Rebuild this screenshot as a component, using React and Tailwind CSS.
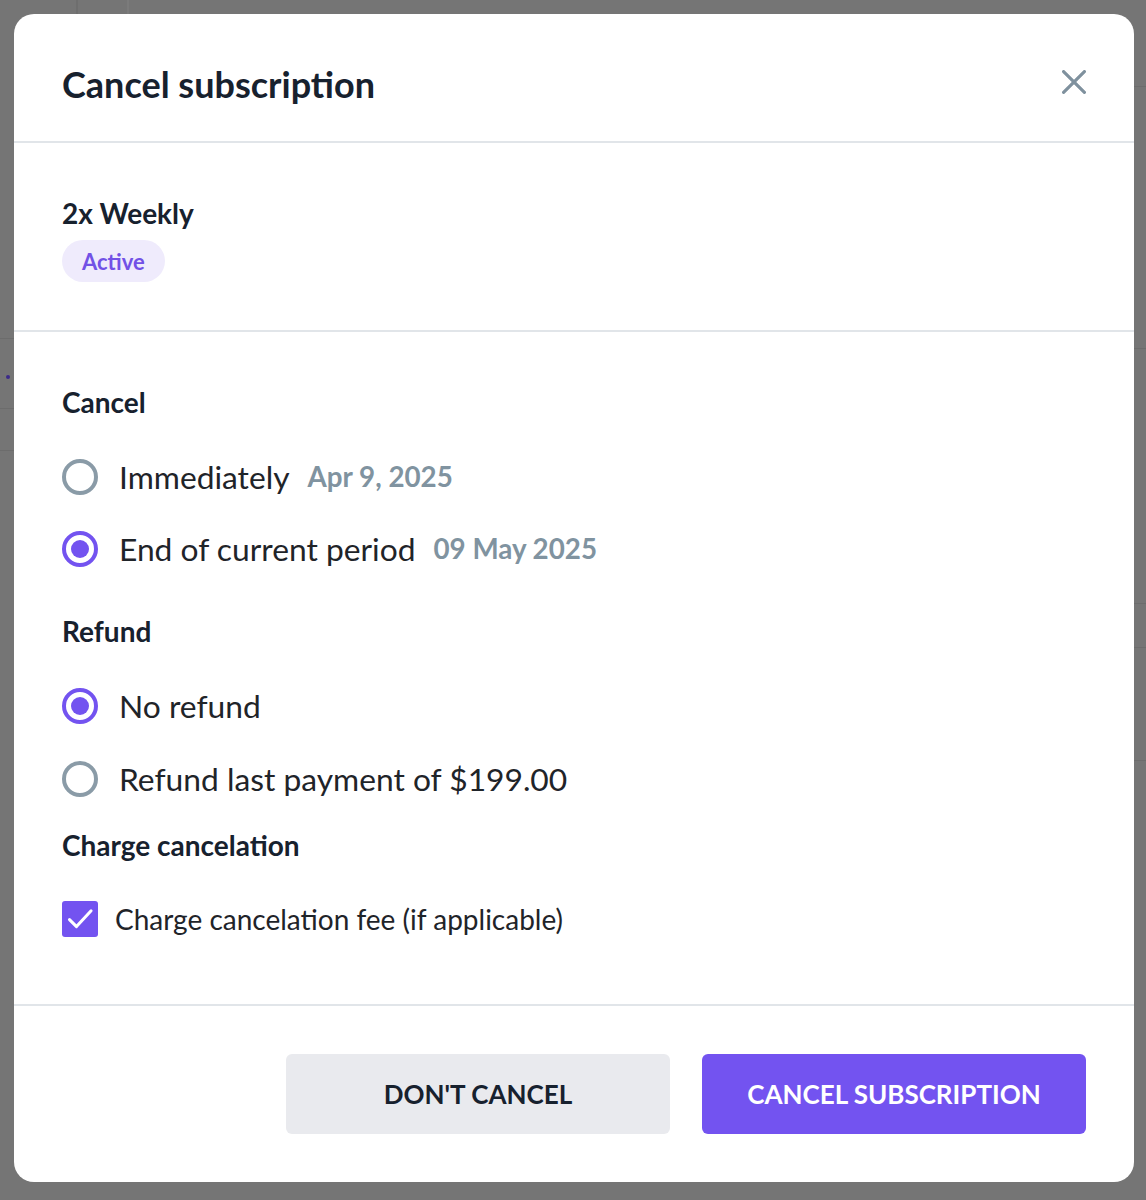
import React from "react";

function Radio({ checked }) {
  return checked ? (
    <span className="flex h-9 w-9 shrink-0 items-center justify-center rounded-full border-[4px] border-[#7353f0]">
      <span className="h-[18px] w-[18px] rounded-full bg-[#7353f0]" />
    </span>
  ) : (
    <span className="h-9 w-9 shrink-0 rounded-full border-[4px] border-[#8a9ba7]" />
  );
}

function RadioRow({ checked, label, extra, className }) {
  return (
    <div className={"flex h-12 items-center " + (className || "")}>
      <Radio checked={checked} />
      <span className="ml-[21px] text-[31.75px] leading-[40px] text-[#1f2429]">{label}</span>
      {extra && (
        <span className="ml-[18px] text-[27.75px] font-bold leading-[40px] text-[#8093a0]">{extra}</span>
      )}
    </div>
  );
}

export default function App() {
  return (
    <div
      className="relative h-[1200px] w-[1146px] overflow-hidden bg-[#757575]"
      style={{ fontFamily: "Lato, 'Noto Sans', sans-serif" }}
    >
      {/* faint underlying page lines */}
      <div className="absolute left-[76px] top-0 h-[14px] w-[2px] bg-[#6e6e6e]" />
      <div className="absolute left-[127px] top-0 h-[14px] w-[2px] bg-[#7b7b7b]" />
      <div className="absolute left-0 top-[338px] h-[1px] w-[14px] bg-[#6c6c6c]" />
      <div className="absolute left-0 top-[408px] h-[1px] w-[14px] bg-[#6c6c6c]" />
      <div className="absolute left-0 top-[450px] h-[1px] w-[14px] bg-[#6c6c6c]" />
      <div className="absolute left-[6px] top-[375px] h-[4px] w-[4px] rounded-full bg-[#3b2a8a]" />
      <div className="absolute right-0 top-[86px] h-[1px] w-[12px] bg-[#6c6c6c]" />
      <div className="absolute right-0 top-[348px] h-[1px] w-[12px] bg-[#6c6c6c]" />
      <div className="absolute right-0 top-[603px] h-[1px] w-[12px] bg-[#6c6c6c]" />
      <div className="absolute right-0 top-[647px] h-[1px] w-[12px] bg-[#6c6c6c]" />
      <div className="absolute right-0 top-[760px] h-[1px] w-[12px] bg-[#6c6c6c]" />

      <div className="relative p-[14px]">
        <div className="flex h-[1168px] w-[1120px] flex-col overflow-hidden rounded-[20px] bg-white">
          {/* header */}
          <div className="flex items-start justify-between border-b-2 border-[#e1e5e9] pl-12 pr-12 pt-[48px] pb-[35px]">
            <h1 className="text-[36px] font-bold leading-[44px] text-[#17212e]">Cancel subscription</h1>
            <button className="mt-[8px] text-[#7f919e]" aria-label="Close">
              <svg width="24" height="24" viewBox="0 0 24 24" fill="none" stroke="currentColor" strokeWidth="3.2" strokeLinecap="round">
                <path d="M1.6 1.6L22.4 22.4M22.4 1.6L1.6 22.4" />
              </svg>
            </button>
          </div>

          {/* plan */}
          <div className="border-b-2 border-[#e1e5e9] px-12 pt-[50px] pb-[48px]">
            <div className="text-[28px] font-bold leading-[40px] text-[#17212e]">2x Weekly</div>
            <span className="mt-[7px] inline-flex h-[42px] items-center rounded-full bg-[#efebfc] px-5 text-[22px] font-bold text-[#7251e6]">
              Active
            </span>
          </div>

          {/* options */}
          <div className="flex-1 border-b-2 border-[#e1e5e9] px-12 pt-[50px]">
            <div className="text-[28px] font-bold leading-[40px] text-[#17212e]">Cancel</div>
            <RadioRow className="mt-[31px]" label="Immediately" extra="Apr 9, 2025" />
            <RadioRow className="mt-[24px]" checked label="End of current period" extra="09 May 2025" />

            <div className="mt-[38px] text-[28px] font-bold leading-[40px] text-[#17212e]">Refund</div>
            <RadioRow className="mt-[31px]" checked label="No refund" />
            <RadioRow className="mt-[25px]" label="Refund last payment of $199.00" />

            <div className="mt-[22px] text-[28px] font-bold leading-[40px] text-[#17212e]">Charge cancelation</div>
            <div className="mt-[30px] flex h-12 items-center">
              <span className="flex h-9 w-9 shrink-0 items-center justify-center rounded-[3px] bg-[#7353f0]">
                <svg width="28" height="28" viewBox="0 0 24 24" fill="none" stroke="white" strokeWidth="2.6" strokeLinecap="round" strokeLinejoin="round">
                  <path d="M3 12.5l6 6L21.5 5" />
                </svg>
              </span>
              <span className="ml-[17px] text-[28px] leading-[40px] text-[#1f2429]">Charge cancelation fee (if applicable)</span>
            </div>
          </div>

          {/* footer */}
          <div className="flex justify-end gap-8 px-12 pt-12 pb-12">
            <button className="flex h-20 w-[384px] items-center justify-center rounded-[6px] bg-[#e9eaee] text-[26px] font-bold uppercase text-[#17212e]">
              Don't cancel
            </button>
            <button className="flex h-20 w-[384px] items-center justify-center rounded-[6px] bg-[#7353f0] text-[26px] font-bold uppercase text-white">
              Cancel subscription
            </button>
          </div>
        </div>
      </div>
    </div>
  );
}
